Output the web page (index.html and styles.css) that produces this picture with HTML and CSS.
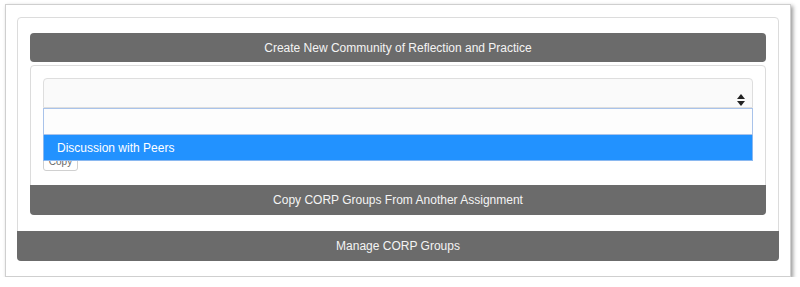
FILE: index.html
```html
<!DOCTYPE html>
<html lang="en">

<head>
    <meta charset="UTF-8">
    <title>CORP Groups</title>
    <link rel="stylesheet" href="styles.css">
</head>

<body>
    <div class="frame">
        <div class="panel">
            <div class="bar bar-create">Create New Community of Reflection and Practice</div>

            <div class="copy-box">
                <div class="picker">
                    <div class="select">
                        <svg class="arrows" width="8" height="12" viewBox="0 0 8 12">
                            <path d="M4 0 L8 5 L0 5 Z" fill="#222"/>
                            <path d="M0 7 L8 7 L4 12 Z" fill="#222"/>
                        </svg>
                    </div>
                    <div class="dropdown">
                        <div class="search"></div>
                        <div class="option">Discussion with Peers</div>
                    </div>
                </div>
                <button class="copy-btn">Copy</button>
                <div class="bar bar-copy">Copy CORP Groups From Another Assignment</div>
            </div>

            <div class="bar bar-manage">Manage CORP Groups</div>
        </div>
    </div>
</body>

</html>
```

FILE: styles.css
```css
body {
    margin: 0;
    background: #fff;
    font-family: 'Liberation Sans', Arial, sans-serif;
}

.frame {
    margin: 4px 0 0 5px;
    width: 786px;
    height: 273px;
    border: 1px solid #cfcfcf;
    box-shadow: 2px 2px 4px rgba(0, 0, 0, 0.4);
    background: #fff;
    padding: 12px 11px 0 11px;
    box-sizing: border-box;
}

.panel {
    border: 1px solid #dcdcdc;
    border-radius: 4px;
    padding: 15px 12px 0 12px;
    display: flex;
    flex-direction: column;
}

.bar {
    background: #6b6b6b;
    color: #f4f4f4;
    font-size: 12px;
    text-align: center;
    display: flex;
    align-items: center;
    justify-content: center;
}

.bar-create {
    height: 29px;
    border-radius: 4px;
}

.copy-box {
    margin-top: 3px;
    border: 1px solid #dcdcdc;
    border-radius: 4px;
    padding: 12px 12px 0 12px;
    display: flex;
    flex-direction: column;
    align-items: flex-start;
}

.picker {
    position: relative;
    align-self: stretch;
}

.select {
    height: 30px;
    box-sizing: border-box;
    border: 1px solid #dedede;
    border-radius: 4px 4px 0 0;
    background: #fafafa;
    position: relative;
}

.arrows {
    position: absolute;
    right: 7px;
    top: 15px;
}

.dropdown {
    position: absolute;
    left: 0;
    right: 0;
    top: 30px;
    z-index: 5;
}

.search {
    height: 27px;
    box-sizing: border-box;
    border: 1px solid #a9c3ea;
    background: #fdfdfd;
}

.option {
    height: 26px;
    box-sizing: border-box;
    background: #2292ff;
    border: 1px solid #8ab8f0;
    border-top: none;
    color: #fff;
    font-size: 12px;
    padding-left: 13px;
    display: flex;
    align-items: center;
}

.copy-btn {
    margin: 43px 0 14px 0;
    height: 20px;
    width: 35px;
    padding: 0;
    font-family: 'Liberation Sans', Arial, sans-serif;
    font-size: 10px;
    color: #666;
    background: #fff;
    border: 1px solid #d0d0d0;
    border-radius: 3px;
}

.bar-copy {
    align-self: stretch;
    margin: 0 -13px -1px -13px;
    height: 30px;
    border-radius: 0 0 4px 4px;
}

.bar-manage {
    margin: 16px -13px -1px -13px;
    height: 30px;
    border-radius: 0 0 4px 4px;
}
```
